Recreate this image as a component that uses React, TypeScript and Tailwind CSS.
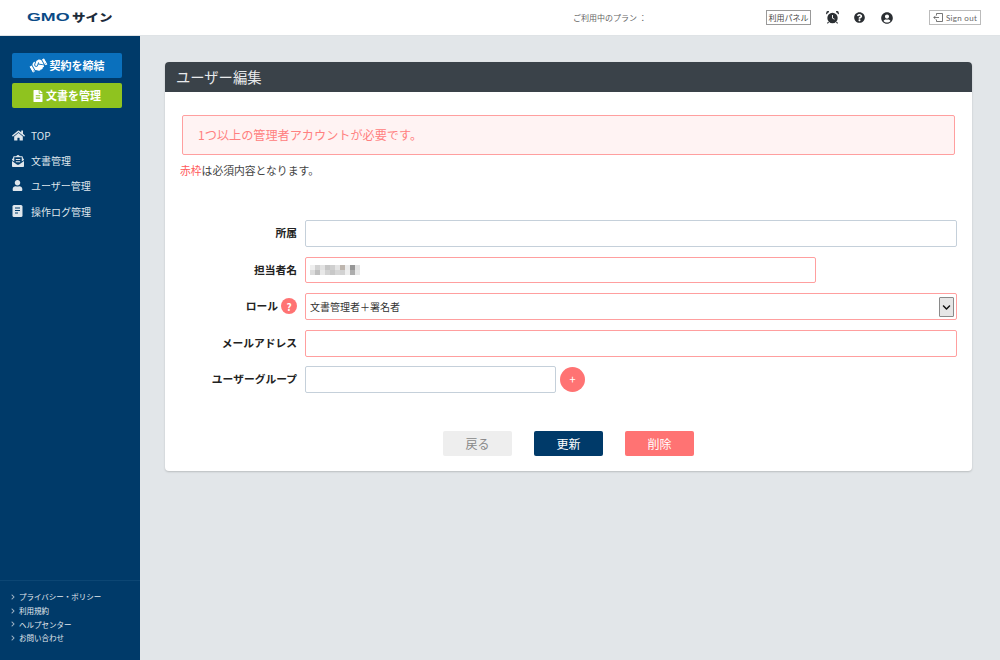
import React from 'react';
import { FaHandshake, FaFileAlt, FaHome, FaEnvelopeOpenText, FaUser, FaQuestionCircle, FaUserCircle, FaChevronRight, FaChevronDown } from 'react-icons/fa';

const font = "font-['Noto_Sans_CJK_JP','Liberation_Sans',sans-serif]";

const navItems = [
  { label: 'TOP', icon: <FaHome className="w-[13px] h-[13px]" /> },
  { label: '文書管理', icon: <FaEnvelopeOpenText className="w-[12px] h-[12px]" /> },
  { label: 'ユーザー管理', icon: <FaUser className="w-[11px] h-[11px]" /> },
  {
    label: '操作ログ管理',
    icon: (
      <svg width="11" height="12" viewBox="0 0 11 12">
        <rect x="0.5" y="0" width="10" height="12" rx="1.5" fill="#dfe6ec" />
        <path d="M3 3h5M3 5.5h5M3 8h3" stroke="#003a69" strokeWidth="1" />
      </svg>
    ),
  },
];

const footerLinks = ['プライバシー・ポリシー', '利用規約', 'ヘルプセンター', 'お問い合わせ'];

const mosaic = [
  '#efefef', '#d2d2d2', '#e2e2e2', '#c6c6c6', '#cfcfcf', '#e4e4e4', '#bdb5ae', '#ebebeb', '#969696', '#e2e2e2',
  '#dcdcdc', '#bfbfbf', '#e8e8e8', '#d2d2d2', '#c8c8c8', '#d6d6d6', '#d2d2d2', '#eeeeee', '#adadad', '#e8e8e8',
];

function Field({ label, children, help, className = '' }: { label: string; children: React.ReactNode; help?: boolean; className?: string }) {
  return (
    <div className={`flex items-center h-[27px] ${className}`}>
      <label className="w-[140px] pr-[8px] pb-[1px] flex items-center justify-end gap-[3px] text-[10.75px] font-bold text-[#222]">
        {label}
        {help && (
          <span className="w-[16px] h-[16px] rounded-full bg-[#ff7373] text-white text-[10px] flex items-center justify-center">?</span>
        )}
      </label>
      {children}
    </div>
  );
}

export default function App() {
  return (
    <div className={`w-[1000px] h-[660px] flex flex-col overflow-hidden bg-[#e2e6e9] ${font}`}>
      <header className="h-[36px] shrink-0 bg-white flex items-center border-b border-[#dfe3e6]">
        <div className="w-[140px] pl-[27px] flex items-center">
          <span className="inline-block w-[45px] origin-left scale-x-[1.55] font-['Liberation_Sans',sans-serif] text-[11.5px] font-bold text-[#0a4a86] leading-none">GMO</span>
          <span className="inline-block scale-y-[0.8] text-[13.5px] font-black text-[#1c2b3a] leading-none whitespace-nowrap">サイン</span>
        </div>
        <span className="ml-[433px] w-[73px] text-[8px] text-[#666] whitespace-nowrap">ご利用中のプラン ：</span>
        <span className="ml-[120px] w-[45px] h-[15px] border border-[#999] flex items-center justify-center text-[8px] text-[#444] whitespace-nowrap">利用パネル</span>
        <svg className="ml-[15px]" width="13" height="13" viewBox="0 0 13 13">
          <circle cx="6.5" cy="7" r="5.2" fill="#2b2f33" />
          <path d="M6.5 4v3.2l2 1" stroke="#fff" strokeWidth="0.9" fill="none" />
          <path d="M0.3 3L3 0.6 1.2 0.2zM12.7 3L10 0.6l1.8-.4z" fill="#2b2f33" stroke="#2b2f33" strokeWidth="0.8" />
          <path d="M2.6 11l-1.2 1.4M10.4 11l1.2 1.4" stroke="#2b2f33" strokeWidth="1.1" />
        </svg>
        <FaQuestionCircle className="ml-[15px] w-[11px] h-[11px] text-[#2b2f33]" />
        <FaUserCircle className="ml-[16px] w-[12px] h-[12px] text-[#2b2f33]" />
        <span className="ml-[36px] w-[52px] h-[15px] border border-[#bbb] flex items-center justify-center gap-[3px] text-[8px] text-[#666] font-['Lato',sans-serif] tracking-[0.3px] whitespace-nowrap">
          <svg width="10" height="9" viewBox="0 0 10 9" fill="none" stroke="#555" strokeWidth="0.8">
            <path d="M3.5 2.5V.5h6v8h-6v-2M6 4.5H.8M2.5 2.8L.8 4.5l1.7 1.7" />
          </svg>
          Sign out
        </span>
      </header>

      <div className="flex flex-1 min-h-0">
        <aside className="w-[140px] shrink-0 bg-[#003a69] flex flex-col">
          <div className="pl-[12px] pr-[18px] pt-[17px] flex flex-col gap-[5px]">
            <button className="h-[25px] rounded-[2px] bg-[#0a70bd] text-white text-[11px] font-bold flex items-center justify-center gap-[3px]">
              <FaHandshake className="w-[17px] h-[15px] -rotate-[30deg]" />
              契約を締結
            </button>
            <button className="h-[25px] rounded-[2px] bg-[#8fc31f] text-white text-[11px] font-bold flex items-center justify-center gap-[3px]">
              <FaFileAlt className="w-[10px] h-[12px]" />
              文書を管理
            </button>
          </div>
          <nav className="mt-[15px] pl-[12px] flex flex-col">
            {navItems.map((item) => (
              <a key={item.label} className="h-[25.2px] flex items-center text-[10px] text-[#dfe6ec]">
                <span className="w-[19px] flex items-center">{item.icon}</span>
                {item.label}
              </a>
            ))}
          </nav>
          <div className="mt-auto border-t border-[#0c4674] h-[80px] pt-[9px] pl-[11px] flex flex-col">
            {footerLinks.map((link) => (
              <a key={link} className="h-[13.7px] flex items-center text-[7.5px] text-[#e4eaef] whitespace-nowrap">
                <FaChevronRight className="w-[4px] h-[6px] mr-[4px] text-[#9fb3c4]" />
                {link}
              </a>
            ))}
          </div>
        </aside>

        <main className="flex-1 pl-[25px] pr-[28px] pt-[26px]">
          <div className="h-[409px] bg-white rounded-[4px] shadow-[0_1px_2px_rgba(0,0,0,0.18)] overflow-hidden">
            <h2 className="h-[30px] bg-[#3a4249] text-[#e8eaec] text-[14.3px] pl-[11px] pb-[1px] flex items-center">ユーザー編集</h2>
            <div className="pt-[23px] px-[15px]">
              <div className="ml-[2px] mr-[2px] h-[40px] bg-[#fff3f3] border border-[#ff9f9f] rounded-[2px] pl-[15px] flex items-center text-[12.15px] text-[#ff8080]">
                1つ以上の管理者アカウントが必要です。
              </div>
              <p className="mt-[7px] text-[10.8px] leading-[16px] text-[#444]">
                <span className="text-[#ff5a5a]">赤枠</span>は必須内容となります。
              </p>

              <form className="mt-[42px] -ml-[15px] flex flex-col">
                <Field label="所属">
                  <input className="w-[652px] h-[27px] border border-[#c5d0da] rounded-[2px] bg-white" />
                </Field>
                <Field label="担当者名" className="mt-[10px]">
                  <div className="self-start w-[511px] h-[26px] border border-[#ff9f9f] rounded-[2px] flex items-center pl-[4px]">
                    <div className="grid grid-cols-[repeat(10,5px)] h-[10px]">
                      {mosaic.map((c, i) => (
                        <div key={i} className="h-[5px]" style={{ backgroundColor: c }} />
                      ))}
                    </div>
                  </div>
                </Field>
                <Field label="ロール" help className="mt-[9px]">
                  <div className="relative w-[652px] h-[27px]">
                    <select className="block w-full h-full appearance-none border border-[#ff9f9f] rounded-[2px] bg-white pl-[4px] pb-[1px] text-[10px] text-[#333]">
                      <option>文書管理者＋署名者</option>
                    </select>
                    <span className="absolute right-[3px] top-[4px] w-[15px] h-[20px] bg-[#e6e6e6] border border-[#8a8a8a] rounded-[1px] flex items-center justify-center">
                      <FaChevronDown className="w-[9px] h-[9px] text-[#111]" />
                    </span>
                  </div>
                </Field>
                <Field label="メールアドレス" className="mt-[10px]">
                  <input className="w-[652px] h-[27px] border border-[#ff9f9f] rounded-[2px] bg-white" />
                </Field>
                <Field label="ユーザーグループ" className="mt-[9px]">
                  <input className="w-[251px] h-[27px] border border-[#c5d0da] rounded-[2px] bg-white" />
                  <button type="button" className="ml-[4px] w-[25px] h-[25px] rounded-full bg-[#ff7373] text-white text-[11px] flex items-center justify-center">+</button>
                </Field>
              </form>

              <div className="mt-[38px] ml-[263px] flex gap-[22px] text-[12px]">
                <button className="w-[69px] h-[25px] rounded-[2px] bg-[#eeeeee] text-[#888]">戻る</button>
                <button className="w-[69px] h-[25px] rounded-[2px] bg-[#003a69] text-white">更新</button>
                <button className="w-[69px] h-[25px] rounded-[2px] bg-[#ff7373] text-white">削除</button>
              </div>
            </div>
          </div>
        </main>
      </div>
    </div>
  );
}
